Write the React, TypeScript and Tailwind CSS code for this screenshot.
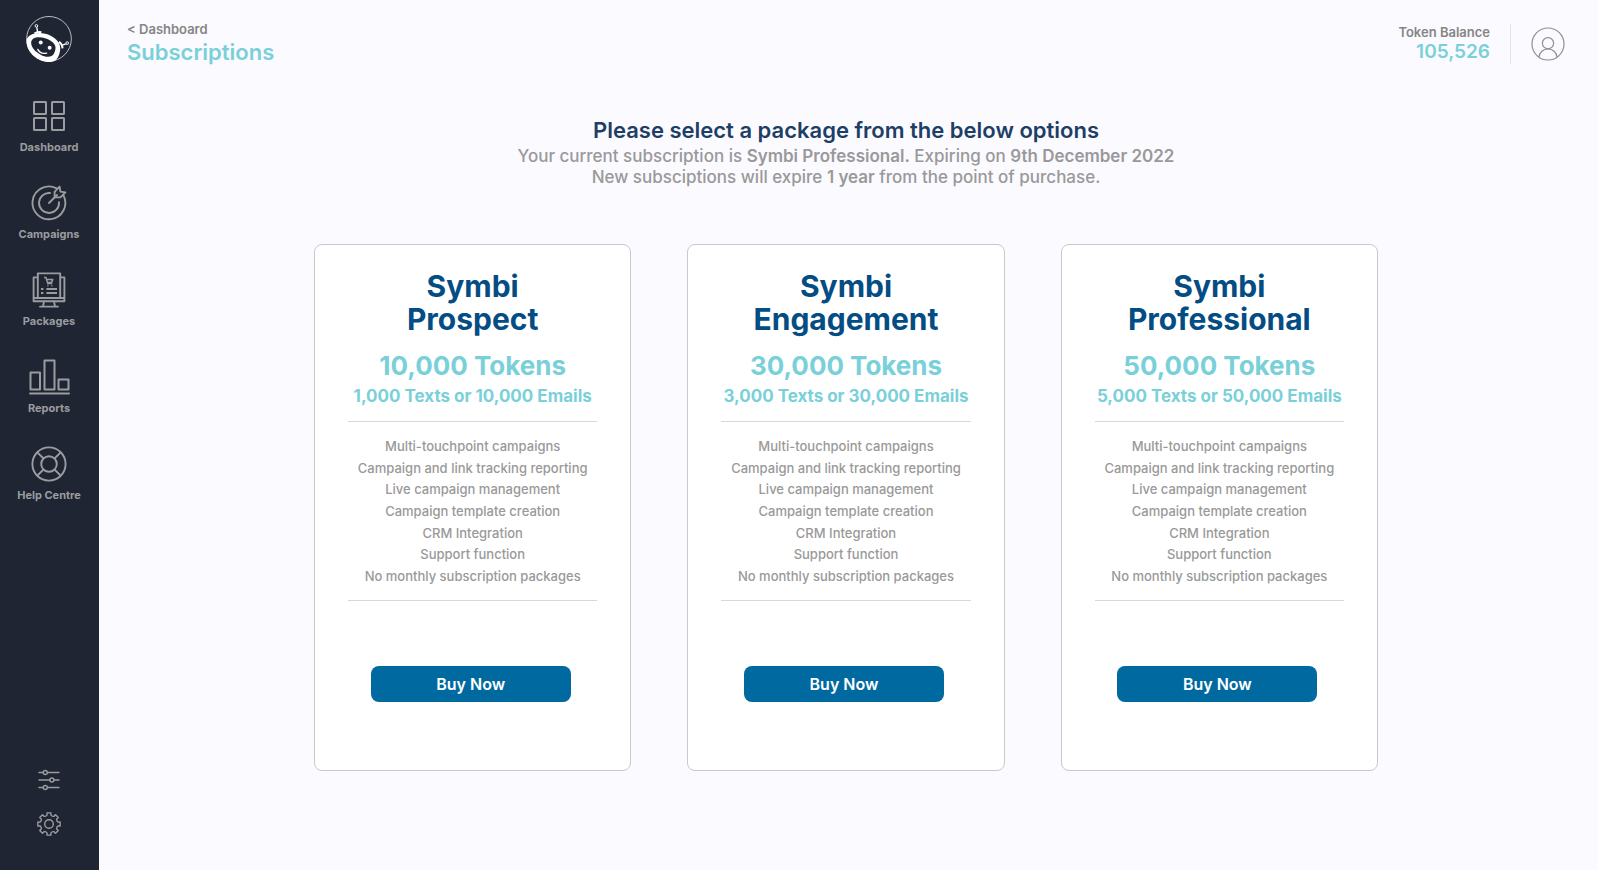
import React from 'react';

interface NavItem {
  label: string;
  icon: React.FC;
}

interface Plan {
  name: string;
  tokens: string;
  usage: string;
}

const SymbiLogo: React.FC = () => (
  <svg viewBox="78 47 138 139" className="w-[46px] h-[46px]" fill="none">
    <circle cx="147" cy="116" r="67.5" stroke="#d4d6da" strokeWidth="2.6" />
    {/* Antennas */}
    <circle cx="109" cy="77" r="4" stroke="#fff" strokeWidth="3" />
    <path d="M110 81l3 16" stroke="#fff" strokeWidth="4" />
    <path d="M103 100q8-6 21-4" stroke="#fff" strokeWidth="6" />
    <circle cx="202" cy="129" r="4" stroke="#fff" strokeWidth="3" />
    <path d="M198 131l-13 5" stroke="#fff" strokeWidth="4" />
    <path d="M177 125q10 6 11 20" stroke="#fff" strokeWidth="6" />
    {/* Head */}
    <path d="M79 124c0-11 8-19 22-23 16-5 36-2 51 6 18 9 29 22 29 38 0 11-4 24-11 33-5 7-15 9-27 8-34-3-64-31-64-62z" fill="#fff" />
    <path d="M93 128c0-10 8-16 19-17 14-1 29 3 40 11 11 7 17 16 14 27-2 9-4 14-10 18-8 5-22 4-34-3-16-8-29-22-29-36z" fill="#1f2532" />
    <circle cx="122" cy="127" r="6" fill="#fff" />
    <circle cx="149" cy="143" r="6" fill="#fff" />
    <path d="M113 148c5 9 15 14 27 11" stroke="#fff" strokeWidth="4" strokeLinecap="round" />
  </svg>
);

const DashboardIcon: React.FC = () => (
  <svg viewBox="0 0 36 36" className="w-9 h-9" fill="none" stroke="currentColor" strokeWidth="2" strokeLinejoin="round">
    <rect x="3" y="4" width="12" height="12" rx="0.5" />
    <rect x="21" y="4" width="12" height="12" rx="0.5" />
    <rect x="3" y="20" width="12" height="12" rx="0.5" />
    <rect x="21" y="20" width="12" height="12" rx="0.5" />
  </svg>
);

const CampaignsIcon: React.FC = () => (
  <svg viewBox="0 0 36 36" className="w-9 h-9" fill="none" stroke="currentColor" strokeWidth="1.9" strokeLinecap="round" strokeLinejoin="round">
    <path d="M25.6 3.4A16.4 16.4 0 1 0 32.6 10.6" />
    <path d="M19 8a10 10 0 1 0 9 9.2" />
    <path d="M18 18l8-8" />
    <path d="M23.6 12.2V6.8l5-5.2.8 5 5 .8-5 5h-5.8z" />
  </svg>
);

const PackagesIcon: React.FC = () => (
  <svg viewBox="0 0 36 36" className="w-9 h-9" fill="none" stroke="currentColor" strokeWidth="1.9" strokeLinejoin="round">
    <path d="M6.8 26V1.4h22.4V26" />
    <path d="M6.8 5.4H2.6v23.8h30.8V5.4h-4.2M2.6 26h30.8" />
    <path d="M13 29.4l-1 5M23 29.4l1 5M9 34.6h18" strokeLinecap="round" />
    <path d="M13 5.6h2l1.8 6h4.4M15.6 7.4h6.2l-1.2 3h-4.2" strokeWidth="1.5" />
    <path d="M16.4 13.6h1M20.4 13.6h1" strokeWidth="1.6" />
    <path d="M10 17h2.4M15.4 17H26M10 21h2.4M15.4 21H26" />
  </svg>
);

const ReportsIcon: React.FC = () => (
  <svg viewBox="0 0 41 36" className="w-[41px] h-9" fill="none" stroke="currentColor" strokeWidth="2" strokeLinejoin="round">
    <rect x="1.5" y="13.5" width="9.5" height="17" />
    <rect x="15.5" y="1.5" width="10" height="29" />
    <rect x="29.5" y="20.5" width="10" height="10" />
    <path d="M1 34.5h39" strokeLinecap="round" />
  </svg>
);

const HelpIcon: React.FC = () => (
  <svg viewBox="0 0 36 36" className="w-9 h-9" fill="none" stroke="currentColor" strokeWidth="1.9">
    <circle cx="18" cy="18" r="16.6" />
    <circle cx="18" cy="18" r="7.8" />
    <path d="M6.3 6.3l6.2 6.2M29.7 6.3l-6.2 6.2M6.3 29.7l6.2-6.2M29.7 29.7l-6.2-6.2" />
  </svg>
);

const SlidersIcon: React.FC = () => (
  <svg viewBox="0 0 24 24" className="w-6 h-6" fill="none" stroke="currentColor" strokeWidth="1.4" strokeLinecap="round">
    <path d="M2 4.5h4.2M10.4 4.5H22M2 12h10.8M17 12h5M2 19.500h4.2M10.4 19.500H22" />
    <circle cx="8.3" cy="4.5" r="2" />
    <circle cx="14.9" cy="12" r="2" />
    <circle cx="8.3" cy="19.5" r="2" />
  </svg>
);

// Eight teeth, one every 45 degrees, with a rounded valley between neighbours
const gearPath = (() => {
  const pt = (r: number, deg: number) => {
    const a = (deg * Math.PI) / 180;
    return `${(12 + r * Math.cos(a)).toFixed(2)} ${(12 + r * Math.sin(a)).toFixed(2)}`;
  };
  let d = '';
  for (let i = 0; i < 8; i++) {
    const c = i * 45;
    d += `${i === 0 ? 'M' : 'L'}${pt(9.2, c - 12)}L${pt(11.3, c - 10)}L${pt(11.3, c + 10)}L${pt(9.2, c + 12)}Q${pt(7.8, c + 22.5)} ${pt(9.2, c + 33)}`;
  }
  return d + 'Z';
})();

const GearIcon: React.FC = () => (
  <svg viewBox="0 0 24 24" className="w-6 h-6" fill="none" stroke="currentColor" strokeWidth="1.4" strokeLinejoin="round">
    <path d={gearPath} />
    <circle cx="12" cy="12" r="4.3" />
  </svg>
);

const AvatarIcon: React.FC = () => (
  <svg viewBox="0 0 34 34" className="w-[34px] h-[34px]" fill="none" stroke="currentColor" strokeWidth="1.2">
    <circle cx="17" cy="17" r="16" />
    <circle cx="17" cy="16.2" r="5.6" />
    <path d="M8 30.2c.4-4.8 4.2-8.2 9-8.2s8.600 3.400 9 8.200" />
  </svg>
);

const NAV_ITEMS: NavItem[] = [
  { label: 'Dashboard', icon: DashboardIcon },
  { label: 'Campaigns', icon: CampaignsIcon },
  { label: 'Packages', icon: PackagesIcon },
  { label: 'Reports', icon: ReportsIcon },
  { label: 'Help Centre', icon: HelpIcon },
];

const PLANS: Plan[] = [
  { name: 'Prospect', tokens: '10,000 Tokens', usage: '1,000 Texts or 10,000 Emails' },
  { name: 'Engagement', tokens: '30,000 Tokens', usage: '3,000 Texts or 30,000 Emails' },
  { name: 'Professional', tokens: '50,000 Tokens', usage: '5,000 Texts or 50,000 Emails' },
];

const FEATURES = [
  'Multi-touchpoint campaigns',
  'Campaign and link tracking reporting',
  'Live campaign management',
  'Campaign template creation',
  'CRM Integration',
  'Support function',
  'No monthly subscription packages',
];

const Sidebar: React.FC = () => (
  <aside className="w-[99px] shrink-0 bg-[#1f2532] text-[#9b9c9f] flex flex-col items-center pt-4 pb-[34px] pr-px">
    <a href="#" aria-label="Symbi home">
      <SymbiLogo />
    </a>

    <nav className="mt-9 flex flex-col gap-[30px]">
      {NAV_ITEMS.map((item) => (
        <a key={item.label} href="#" className="flex flex-col items-center gap-[5px]">
          <item.icon />
          <span className="text-[11px] leading-4 font-bold">{item.label}</span>
        </a>
      ))}
    </nav>

    <div className="mt-auto flex flex-col gap-5">
      <button type="button" aria-label="Filters">
        <SlidersIcon />
      </button>
      <button type="button" aria-label="Settings">
        <GearIcon />
      </button>
    </div>
  </aside>
);

const Header: React.FC = () => (
  <header className="flex items-end justify-between">
    <div>
      <a href="#" className="block text-[13px] leading-4 font-semibold text-[#858585]">&lt; Dashboard</a>
      <h1 className="mt-[3px] text-[22px] leading-6 font-semibold text-[#7ad0d9]">Subscriptions</h1>
    </div>
    <div className="flex items-center gap-5">
      <div className="text-right">
        <div className="text-[13px] leading-4 font-semibold text-[#858585]">Token Balance</div>
        <div className="text-[19px] leading-6 font-semibold text-[#7ad0d9]">105,526</div>
      </div>
      <div className="w-px h-10 bg-[#e3e3e9]" />
      <button type="button" aria-label="Account" className="text-[#8f9094]">
        <AvatarIcon />
      </button>
    </div>
  </header>
);

const PlanCard: React.FC<{ plan: Plan }> = ({ plan }) => (
  <section className="bg-white border border-[#c9c9cb] rounded-lg px-[33px] pt-[25px] pb-[68px] text-center">
    <h3 className="text-[30px] leading-[33px] font-bold text-[#044d84]">
      Symbi
      <br />
      {plan.name}
    </h3>
    <p className="mt-3 text-[26px] leading-9 font-bold text-[#7ad0d9]">{plan.tokens}</p>
    <p className="text-[17px] leading-6 font-bold text-[#7ad0d9] whitespace-nowrap">{plan.usage}</p>

    <ul className="mt-[13px] h-[180px] py-[14px] border-y border-[#d8d8d8] flex flex-col justify-between text-[13px] leading-5 font-medium text-[#999]">
      {FEATURES.map((feature) => (
        <li key={feature}>{feature}</li>
      ))}
    </ul>

    <div className="mt-[65px] pr-1">
      <button type="button" className="w-[200px] h-9 rounded-lg bg-[#0069a0] text-white text-[16px] font-semibold">
        Buy Now
      </button>
    </div>
  </section>
);

const App: React.FC = () => {
  return (
    <div className="min-h-screen flex bg-[#fbfaff] font-['Inter',sans-serif]">
      <Sidebar />

      <main className="flex-1 min-w-0 pl-7 pr-[33px] pt-[21px] pb-8">
        <Header />

        <div className="mt-[52px] text-center">
          <h2 className="text-[22px] leading-7 font-semibold text-[#1d3f66]">
            Please select a package from the below options
          </h2>
          <p className="mt-0.5 text-[17px] leading-[21px] font-medium text-[#999]">
            Your current subscription is <strong className="font-semibold">Symbi Professional.</strong> Expiring on{' '}
            <strong className="font-semibold">9th December 2022</strong>
            <br />
            New subsciptions will expire <strong className="font-semibold">1 year</strong> from the point of purchase.
          </p>
        </div>

        <div className="mt-14 max-w-[1064px] mx-auto grid grid-cols-3 gap-14">
          {PLANS.map((plan) => (
            <PlanCard key={plan.name} plan={plan} />
          ))}
        </div>
      </main>
    </div>
  );
};

export default App;
